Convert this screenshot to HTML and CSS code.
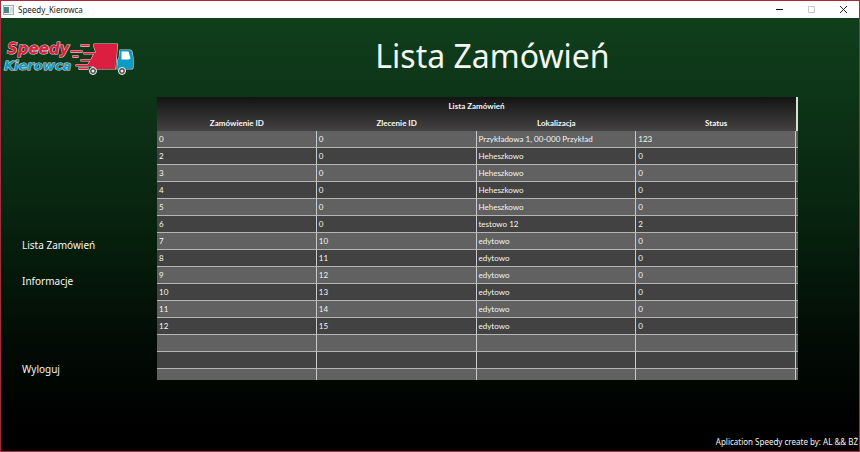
FILE: index.html
```html
<!DOCTYPE html>
<html lang="pl">
<head>
<meta charset="utf-8">
<title>Speedy_Kierowca</title>
<link rel="stylesheet" href="styles.css">
</head>
<body>
<div class="window">
  <header class="titlebar">
    <svg class="app-icon" width="11" height="10" viewBox="0 0 11 10" aria-hidden="true">
      <rect x=".5" y=".5" width="10" height="9" fill="#f4f6f6" stroke="#a3adb0"/>
      <rect x="1" y="2" width="5" height="6" fill="#4b8a83"/>
      <rect x="7" y="2" width="3" height="6" fill="#d5dcdd"/>
    </svg>
    <span class="caption">Speedy_Kierowca</span>
    <div class="controls">
      <button type="button" aria-label="Minimalizuj"><svg width="9" height="9" viewBox="0 0 9 9"><path d="M1 4.5h7" stroke="#111"/></svg></button>
      <button type="button" aria-label="Maksymalizuj" disabled><svg width="9" height="9" viewBox="0 0 9 9"><path d="M1.500 1.500h6v6h-6z" fill="none" stroke="#c8c8c8"/></svg></button>
      <button type="button" aria-label="Zamknij"><svg width="9" height="9" viewBox="0 0 9 9"><path d="M1 1l7 7M8 1l-7 7" stroke="#222"/></svg></button>
    </div>
  </header>
  <div class="content">
    <aside class="sidebar">
      <svg class="logo" width="134" height="42" viewBox="0 0 134 42" role="img" aria-label="Speedy Kierowca">
        <g class="logo-text">
          <text class="logo-red" x="6" y="16">Speedy</text>
          <text class="logo-blue" x="3" y="32">Kierowca</text>
        </g>
        <g stroke="#e3cdd0" stroke-width="1.200" stroke-linejoin="round" paint-order="stroke">
          <path d="M93 6H116.500L114.500 31H90.500L93 28H75V26.500H87L89 23H80V21.500H90L93 16H83V14.500H95L93 9Z" fill="#dc1f40"/>
          <path d="M80 6.500h8v1.800h-8zM70 12.500h11v1.800H70zM72 17.500h5v1.800h-5zM78 29.500h9v1.800h-9z" fill="#dc1f40"/>
          <path d="M119 12h9.500q2 0 2.500 2l1 6v9q0 2-2 2h-14l1-10h1z" fill="#0c9bc4"/>
        </g>
        <path d="M120.500 13.500h7l2 7-2 1h-7z" fill="#fff"/>
        <g fill="#48494b" stroke="#f6f6f6">
          <circle cx="92" cy="33" r="3.500"/><circle cx="121" cy="33" r="3.500"/>
        </g>
        <circle cx="92" cy="33" r="1.500" fill="#eee"/><circle cx="121" cy="33" r="1.500" fill="#eee"/>
      </svg>
      <nav class="menu">
        <a href="#lista">Lista Zamówień</a>
        <a href="#informacje">Informacje</a>
        <a class="logout" href="#wyloguj">Wyloguj</a>
      </nav>
    </aside>
    <main class="main" id="lista">
      <h1>Lista Zamówień</h1>
      <div class="table-view">
        <table>
          <thead>
            <tr><th colspan="4">Lista Zamówień</th><th class="filler"></th></tr>
            <tr><th>Zamówienie ID</th><th>Zlecenie ID</th><th>Lokalizacja</th><th>Status</th><th class="filler"></th></tr>
          </thead>
          <tbody>
            <tr><td>0</td><td>0</td><td>Przykładowa 1, 00-000 Przykład</td><td>123</td><td></td></tr>
            <tr><td>2</td><td>0</td><td>Heheszkowo</td><td>0</td><td></td></tr>
            <tr><td>3</td><td>0</td><td>Heheszkowo</td><td>0</td><td></td></tr>
            <tr><td>4</td><td>0</td><td>Heheszkowo</td><td>0</td><td></td></tr>
            <tr><td>5</td><td>0</td><td>Heheszkowo</td><td>0</td><td></td></tr>
            <tr><td>6</td><td>0</td><td>testowo 12</td><td>2</td><td></td></tr>
            <tr><td>7</td><td>10</td><td>edytowo</td><td>0</td><td></td></tr>
            <tr><td>8</td><td>11</td><td>edytowo</td><td>0</td><td></td></tr>
            <tr><td>9</td><td>12</td><td>edytowo</td><td>0</td><td></td></tr>
            <tr><td>10</td><td>13</td><td>edytowo</td><td>0</td><td></td></tr>
            <tr><td>11</td><td>14</td><td>edytowo</td><td>0</td><td></td></tr>
            <tr><td>12</td><td>15</td><td>edytowo</td><td>0</td><td></td></tr>
            <tr><td></td><td></td><td></td><td></td><td></td></tr>
            <tr><td></td><td></td><td></td><td></td><td></td></tr>
            <tr><td></td><td></td><td></td><td></td><td></td></tr>
          </tbody>
        </table>
      </div>
    </main>
  </div>
  <footer>Aplication Speedy create by: AL &amp;&amp; BŻ</footer>
</div>
</body>
</html>
```
FILE: styles.css
```css
* { box-sizing: border-box; }

body {
  margin: 0;
  font-family: "Noto Sans", "Open Sans", sans-serif;
  color: #f4f6f4;
}

.window {
  min-height: 100vh;
  display: flex;
  flex-direction: column;
  border: 1px solid #a82b3c;
  background: linear-gradient(#103f1c 18px, #0b2f15 30%, #06200d 52%, #020b05 76%, #000 95%);
}

.titlebar {
  display: flex;
  align-items: center;
  height: 17px;
  padding-left: 2px;
  gap: 4px;
  background: #fff;
  color: #222;
  font-size: 8px;
}

.controls {
  display: flex;
  margin-left: auto;
}

.controls button {
  display: flex;
  align-items: center;
  justify-content: center;
  width: 32px;
  height: 17px;
  padding: 0;
  border: 0;
  background: none;
}

.content {
  flex: 1;
  display: flex;
}

.sidebar {
  width: 156px;
  padding-top: 20px;
}

.logo { display: block; }

.logo-text {
  font-family: "DejaVu Sans", sans-serif;
  font-style: italic;
  font-weight: bold;
  stroke: #e3d6d8;
  stroke-width: 1px;
  paint-order: stroke;
}

.logo-red { font-size: 15px; fill: #dc1f40; }
.logo-blue { font-size: 13px; fill: #0c9bc4; }

.menu {
  display: flex;
  flex-direction: column;
  align-items: flex-start;
  gap: 20px;
  padding: 157px 0 0 21px;
  font-size: 10px;
  line-height: 16px;
}

.menu a {
  color: inherit;
  text-decoration: none;
}

.menu .logout { margin-top: 52px; }

.main {
  flex: 1;
  padding-right: 61px;
}

h1 {
  margin: 0;
  padding: 14px 0 17px;
  padding-left: 30px;
  text-align: center;
  font-size: 32px;
  font-weight: 400;
  line-height: 48px;
}

.table-view {
  height: 283px;
  overflow: hidden;
}

table {
  width: 100%;
  table-layout: fixed;
  border-collapse: separate;
  border-spacing: 0;
  font-family: Lato, "Noto Sans", sans-serif;
  font-size: 8px;
  line-height: 16px;
}

thead { background: linear-gradient(#141414, #444243); }

th, td {
  height: 17px;
  padding: 0 2px;
  white-space: nowrap;
}

th { font-weight: 700; }

th.filler, td:last-child { width: 2px; padding: 0; }

th.filler { background: #d5e0d6; }

td {
  border-right: 1px solid #c9c9c9;
  border-bottom: 1px solid #b5b5b5;
}

td:last-child { border-right: 0; }

tbody tr:nth-child(odd) { background: #616161; }
tbody tr:nth-child(even) { background: #424242; }

footer {
  padding-right: 1px;
  text-align: right;
  font-size: 8px;
  line-height: 18px;
}
```
